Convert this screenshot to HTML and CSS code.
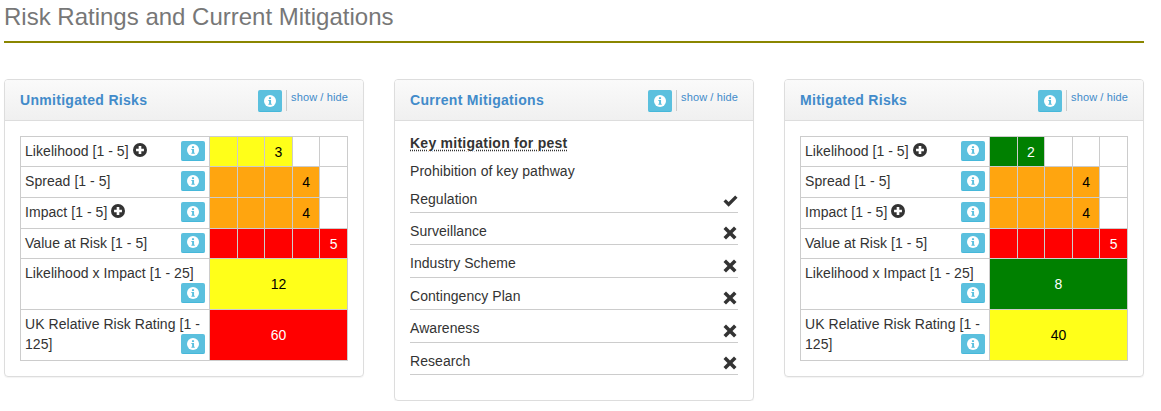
FILE: index.html
```html
<!DOCTYPE html>
<html lang="en">

<head>
  <meta charset="UTF-8" />
  <title>Risk Ratings and Current Mitigations</title>
  <link rel="stylesheet" href="styles.css">
</head>

<body>

  <svg class="defs" width="0" height="0">
    <symbol id="info" viewBox="0 0 16 16">
      <circle cx="8" cy="8" r="8" fill="#fff" />
      <rect x="6.6" y="3" width="2.8" height="2.4" fill="#5bc0de" />
      <path d="M5.8 6.6h3.6v5h1v1.5H5.8v-1.5h1v-3.5h-1z" fill="#5bc0de" />
    </symbol>
    <symbol id="plus" viewBox="0 0 16 16">
      <circle cx="8" cy="8" r="8" fill="#333" />
      <path d="M6.5 3.5h3v3h3v3h-3v3h-3v-3h-3v-3h3z" fill="#fff" />
    </symbol>
    <symbol id="check" viewBox="0 0 16 14">
      <path d="M0.5 7.500l2.500-2.500 3 3 7-7 2.500 2.500-9.500 9.500z" fill="#333" />
    </symbol>
    <symbol id="cross" viewBox="0 0 14 14">
      <path d="M3 0.500l4 4 4-4 2.500 2.500-4 4 4 4-2.500 2.500-4-4-4 4-2.500-2.500 4-4-4-4z" fill="#333" />
    </symbol>
  </svg>

  <div class="page">
    <h1 class="page-title">Risk Ratings and Current Mitigations</h1>

    <div class="columns">

      <div class="panel">
        <div class="panel-head">
          <h3>Unmitigated Risks</h3>
          <span class="info-btn big"><svg><use href="#info" /></svg></span>
          <a class="toggle">show / hide</a>
        </div>
        <div class="panel-body">
          <table class="ratings">
            <tr class="row-a">
              <td class="label">Likelihood [1 - 5] <svg class="plus"><use href="#plus" /></svg><span class="info-btn"><svg><use href="#info" /></svg></span></td>
              <td class="yellow"></td><td class="yellow"></td><td class="yellow">3</td><td></td><td></td>
            </tr>
            <tr class="row-b">
              <td class="label">Spread [1 - 5]<span class="info-btn"><svg><use href="#info" /></svg></span></td>
              <td class="orange"></td><td class="orange"></td><td class="orange"></td><td class="orange">4</td><td></td>
            </tr>
            <tr class="row-b">
              <td class="label">Impact [1 - 5] <svg class="plus"><use href="#plus" /></svg><span class="info-btn"><svg><use href="#info" /></svg></span></td>
              <td class="orange"></td><td class="orange"></td><td class="orange"></td><td class="orange">4</td><td></td>
            </tr>
            <tr class="row-a">
              <td class="label">Value at Risk [1 - 5]<span class="info-btn"><svg><use href="#info" /></svg></span></td>
              <td class="red"></td><td class="red"></td><td class="red"></td><td class="red"></td><td class="red">5</td>
            </tr>
            <tr class="row-c">
              <td class="label">Likelihood x Impact [1 - 25]<span class="info-btn"><svg><use href="#info" /></svg></span></td>
              <td class="yellow" colspan="5">12</td>
            </tr>
            <tr class="row-c">
              <td class="label">UK Relative Risk Rating [1 - 125]<span class="info-btn"><svg><use href="#info" /></svg></span></td>
              <td class="red" colspan="5">60</td>
            </tr>
          </table>
        </div>
      </div>

      <div class="panel">
        <div class="panel-head">
          <h3>Current Mitigations</h3>
          <span class="info-btn big"><svg><use href="#info" /></svg></span>
          <a class="toggle">show / hide</a>
        </div>
        <div class="panel-body mitigations">
          <p class="key"><abbr>Key mitigation for pest</abbr></p>
          <p class="pathway">Prohibition of key pathway</p>
          <div class="mit-row">Regulation <svg class="tick"><use href="#check" /></svg></div>
          <div class="mit-row">Surveillance <svg class="no"><use href="#cross" /></svg></div>
          <div class="mit-row">Industry Scheme <svg class="no"><use href="#cross" /></svg></div>
          <div class="mit-row">Contingency Plan <svg class="no"><use href="#cross" /></svg></div>
          <div class="mit-row">Awareness <svg class="no"><use href="#cross" /></svg></div>
          <div class="mit-row">Research <svg class="no"><use href="#cross" /></svg></div>
        </div>
      </div>

      <div class="panel">
        <div class="panel-head">
          <h3>Mitigated Risks</h3>
          <span class="info-btn big"><svg><use href="#info" /></svg></span>
          <a class="toggle">show / hide</a>
        </div>
        <div class="panel-body">
          <table class="ratings">
            <tr class="row-a">
              <td class="label">Likelihood [1 - 5] <svg class="plus"><use href="#plus" /></svg><span class="info-btn"><svg><use href="#info" /></svg></span></td>
              <td class="green"></td><td class="green">2</td><td></td><td></td><td></td>
            </tr>
            <tr class="row-b">
              <td class="label">Spread [1 - 5]<span class="info-btn"><svg><use href="#info" /></svg></span></td>
              <td class="orange"></td><td class="orange"></td><td class="orange"></td><td class="orange">4</td><td></td>
            </tr>
            <tr class="row-b">
              <td class="label">Impact [1 - 5] <svg class="plus"><use href="#plus" /></svg><span class="info-btn"><svg><use href="#info" /></svg></span></td>
              <td class="orange"></td><td class="orange"></td><td class="orange"></td><td class="orange">4</td><td></td>
            </tr>
            <tr class="row-a">
              <td class="label">Value at Risk [1 - 5]<span class="info-btn"><svg><use href="#info" /></svg></span></td>
              <td class="red"></td><td class="red"></td><td class="red"></td><td class="red"></td><td class="red">5</td>
            </tr>
            <tr class="row-c">
              <td class="label">Likelihood x Impact [1 - 25]<span class="info-btn"><svg><use href="#info" /></svg></span></td>
              <td class="green" colspan="5">8</td>
            </tr>
            <tr class="row-c">
              <td class="label">UK Relative Risk Rating [1 - 125]<span class="info-btn"><svg><use href="#info" /></svg></span></td>
              <td class="yellow" colspan="5">40</td>
            </tr>
          </table>
        </div>
      </div>

    </div>
  </div>

</body>

</html>
```

FILE: styles.css
```css
body {
  margin: 0;
  background-color: #fff;
  font-family: "Liberation Sans", Arial, sans-serif;
  font-size: 14px;
  line-height: 20px;
  letter-spacing: 0.05px;
  color: #333;
}

.defs {
  display: block;
  height: 0;
}

.page {
  width: 1140px;
  margin-left: 4px;
}

.page-title {
  margin: 0 0 36px;
  height: 41px;
  border-bottom: 2px solid #8a8600;
  font-size: 24px;
  font-weight: normal;
  line-height: 34px;
  letter-spacing: 0;
  color: #777;
}

.columns {
  display: grid;
  grid-template-columns: repeat(3, 360px);
  gap: 30px;
  align-items: start;
}

.panel {
  border: 1px solid #ddd;
  border-radius: 4px;
  box-shadow: 0 1px 1px rgba(0, 0, 0, 0.05);
}

.panel-head {
  display: flex;
  align-items: flex-start;
  height: 41px;
  box-sizing: border-box;
  padding: 10px 15px;
  background: linear-gradient(#fafafa, #f0f0f0);
  border-bottom: 1px solid #ddd;
  border-radius: 3px 3px 0 0;
}

.panel-head h3 {
  flex: 1;
  margin: 0;
  font-size: 14px;
  font-weight: bold;
  line-height: 20px;
  color: #428bca;
  letter-spacing: 0.3px;
}

.toggle {
  height: 21px;
  margin-left: 4px;
  padding-left: 4px;
  border-left: 1px solid #ccc;
  font-size: 11px;
  line-height: 15px;
  color: #428bca;
  letter-spacing: 0.12px;
}

.panel-body {
  padding: 15px;
}

.info-btn {
  display: flex;
  align-items: center;
  justify-content: center;
  float: right;
  width: 24px;
  height: 20px;
  margin: 0 0 0 4px;
  background-color: #5bc0de;
  border-bottom: 1px solid #46b8da;
  box-sizing: border-box;
  border-radius: 2px;
}

.info-btn svg {
  width: 12px;
  height: 12px;
}

.info-btn.big {
  float: none;
  height: 22px;
  margin: 0;
}

.ratings {
  width: 328px;
  border-collapse: collapse;
  table-layout: fixed;
}

.ratings td {
  border: 1px solid #ccc;
  padding: 0;
  text-align: center;
}

.ratings td.label {
  width: 180px;
  padding: 3px 4px 5px 4px;
  text-align: left;
}

.row-a {
  height: 30px;
}

.row-b {
  height: 31px;
}

.row-c {
  height: 51px;
}

.plus {
  width: 14px;
  height: 14px;
  vertical-align: -1px;
}

.yellow {
  background-color: #ffff19;
  color: #000;
}

.orange {
  background-color: #ffa50f;
  color: #000;
}

.red {
  background-color: #f00;
  color: #fff;
}

.green {
  background-color: #008000;
  color: #fff;
}

.mitigations {
  padding-top: 12px;
  padding-bottom: 25px;
}

.mitigations p {
  margin: 0;
}

.key {
  height: 28px;
  font-weight: bold;
  letter-spacing: 0.25px;
}

.key abbr {
  text-decoration: underline dotted #333;
  text-underline-offset: 2px;
}

.pathway {
  height: 28px;
}

.mit-row {
  display: flex;
  justify-content: space-between;
  align-items: flex-end;
  height: 32.500px;
  box-sizing: border-box;
  border-bottom: 1px solid #ccc;
  padding-bottom: 3.500px;
}

.mit-row svg {
  margin-bottom: 0.500px;
}

.pathway + .mit-row {
  height: 23.800px;
  padding-bottom: 3px;
}

.tick {
  width: 15px;
  height: 14px;
}

.no {
  width: 14px;
  height: 14px;
  margin-right: 1px;
}
```
